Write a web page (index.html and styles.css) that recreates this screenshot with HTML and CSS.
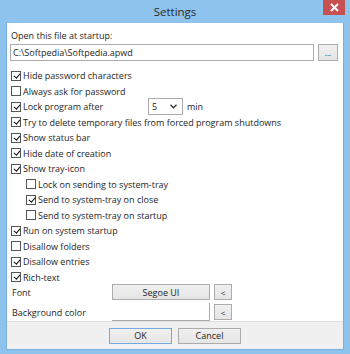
FILE: index.html
```html
<!DOCTYPE html>
<html lang="en">
<head>
    <meta charset="UTF-8">
    <title>Settings</title>
    <link rel="stylesheet" href="styles.css">
</head>
<body>
    <div class="window">
        <div class="titlebar">
            <span class="title">Settings</span>
            <span class="close-btn">
                <svg width="9" height="9" viewBox="0 0 9 9"><path d="M1 1 L8 8 M8 1 L1 8" stroke="#fff" stroke-width="2"/></svg>
            </span>
        </div>

        <div class="client">
            <div class="content">
                <div class="label-line">Open this file at startup:</div>
                <div class="path-row">
                    <div class="textbox path-box">C:\Softpedia\Softpedia.apwd</div>
                    <div class="btn small-btn">...</div>
                </div>

                <div class="check-list">
                    <div class="check-row"><span class="box on"></span>Hide password characters</div>
                    <div class="check-row"><span class="box"></span>Always ask for password</div>
                    <div class="check-row">
                        <span class="box on"></span><span class="lock-label">Lock program after</span>
                        <span class="combo">5<svg width="7" height="5" viewBox="0 0 7 5"><path d="M0.5 0.8 L3.5 3.8 L6.5 0.8" stroke="#333" stroke-width="1.3" fill="none"/></svg></span>
                        <span class="unit">min</span>
                    </div>
                    <div class="check-row"><span class="box on"></span>Try to delete temporary files from forced program shutdowns</div>
                    <div class="check-row"><span class="box on"></span>Show status bar</div>
                    <div class="check-row"><span class="box on"></span>Hide date of creation</div>
                    <div class="check-row"><span class="box on"></span>Show tray-icon</div>
                    <div class="check-row sub"><span class="box"></span>Lock on sending to system-tray</div>
                    <div class="check-row sub"><span class="box on"></span>Send to system-tray on close</div>
                    <div class="check-row sub"><span class="box"></span>Send to system-tray on startup</div>
                    <div class="check-row"><span class="box on"></span>Run on system startup</div>
                    <div class="check-row"><span class="box"></span>Disallow folders</div>
                    <div class="check-row"><span class="box on"></span>Disallow entries</div>
                    <div class="check-row"><span class="box on"></span>Rich-text</div>
                </div>

                <div class="pick-row">
                    <span class="pick-label">Font</span>
                    <span class="btn pick-value">Segoe UI</span>
                    <span class="btn arrow-btn">&lt;</span>
                </div>
                <div class="pick-row color-row">
                    <span class="pick-label">Background color</span>
                    <span class="color-value"></span>
                    <span class="btn arrow-btn">&lt;</span>
                </div>
            </div>

            <div class="footer">
                <span class="btn dlg-btn default">OK</span>
                <span class="btn dlg-btn">Cancel</span>
            </div>
        </div>
    </div>
</body>
</html>
```

FILE: styles.css
```css
/* dialog window */
body {
    margin: 0;
    font-family: "Open Sans", "Noto Sans", sans-serif;
    font-size: 9px;
    color: #1e1e1e;
}

.window {
    width: 350px;
    height: 354px;
    background: #8ec3ee;
    display: flex;
    flex-direction: column;
    box-sizing: border-box;
}

.titlebar {
    height: 22px;
    display: grid;
    grid-template-columns: 1fr auto 1fr;
    align-items: start;
}

.title {
    grid-column: 2;
    font-size: 11.5px;
    line-height: 23px;
    color: #2a2a2a;
}

.close-btn {
    grid-column: 3;
    justify-self: end;
    width: 22px;
    height: 15px;
    margin-right: 5px;
    background: #c75050;
    display: flex;
    align-items: center;
    justify-content: center;
}

.client {
    flex: 1;
    margin: 0 6px 6px;
    background: #fff;
    display: flex;
    flex-direction: column;
    border: 1px solid #7aaedc;
    border-top-color: #8ec3ee;
}

.content {
    flex: 1;
    padding: 6px 5px 0 3px;
}

.label-line {
    line-height: 14px;
    padding-left: 1px;
}

.path-row {
    display: flex;
    gap: 4px;
    margin-top: 1px;
}

.textbox {
    border: 1px solid #acacac;
    box-sizing: border-box;
    height: 17px;
    line-height: 15px;
    padding-left: 2px;
}

.path-box {
    width: 304px;
}

.btn {
    box-sizing: border-box;
    border: 1px solid #acacac;
    background: linear-gradient(#f0f0f0, #e5e5e5);
    display: flex;
    align-items: center;
    justify-content: center;
    color: #1e1e1e;
}

.small-btn {
    width: 20px;
    height: 17px;
    font-size: 8px;
    line-height: 1;
}

.check-list {
    margin-top: 7px;
}

.check-row {
    height: 15.5px;
    display: flex;
    align-items: center;
    padding-left: 1px;
}

.check-row.sub {
    padding-left: 16px;
}

.box {
    width: 10px;
    height: 10px;
    box-sizing: border-box;
    border: 1px solid #555;
    background: #fff;
    margin-right: 2px;
    flex: none;
    position: relative;
}

.box.on::after {
    content: "";
    position: absolute;
    left: 2.5px;
    top: 0px;
    width: 2.5px;
    height: 5px;
    border: solid #111;
    border-width: 0 1.6px 1.6px 0;
    transform: rotate(40deg);
}

.lock-label {
    width: 125px;
}

.combo {
    width: 35px;
    height: 17px;
    box-sizing: border-box;
    border: 1px solid #acacac;
    display: flex;
    align-items: center;
    justify-content: space-between;
    padding: 0 5px 0 3px;
    margin-right: 4px;
}

.pick-row {
    display: flex;
    align-items: center;
    height: 16px;
    margin-top: -1px;
    padding-left: 2px;
}

.pick-label {
    width: 100px;
}

.pick-value {
    width: 98px;
    height: 16px;
    margin-right: 4px;
}

.arrow-btn {
    width: 18px;
    height: 16px;
    font-size: 8px;
}

.color-row {
    height: 18px;
    margin-top: 3px;
}

.color-value {
    width: 98px;
    height: 18px;
    box-sizing: border-box;
    border-right: 1px solid #acacac;
    border-bottom: 1px solid #acacac;
    margin-right: 4px;
}

.footer {
    height: 28px;
    background: #f0f0f0;
    border-top: 1px solid #dfdfdf;
    display: flex;
    justify-content: center;
    align-items: center;
    gap: 6px;
    box-sizing: border-box;
}

.dlg-btn {
    width: 63px;
    height: 16px;
}

.dlg-btn.default {
    border-color: #73abe0;
}
```
